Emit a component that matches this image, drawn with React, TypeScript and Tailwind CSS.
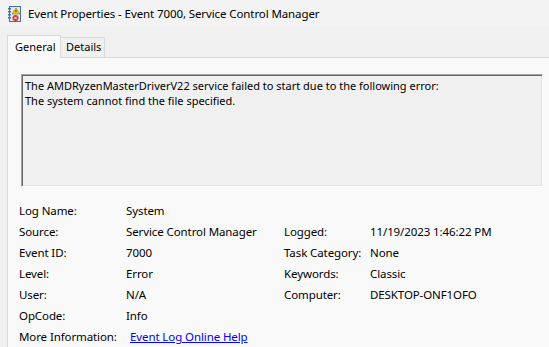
const rows: [string, string, string?, string?][] = [
  ['Log Name:', 'System'],
  ['Source:', 'Service Control Manager', 'Logged:', '11/19/2023 1:46:22 PM'],
  ['Event ID:', '7000', 'Task Category:', 'None'],
  ['Level:', 'Error', 'Keywords:', 'Classic'],
  ['User:', 'N/A', 'Computer:', 'DESKTOP-ONF1OFO'],
  ['OpCode:', 'Info'],
]

const EventIcon = () => (
  <svg width="16" height="16" viewBox="0 0 16 16">
    <rect x="2.5" y="0.5" width="11" height="15" fill="#dfe8f5" stroke="#4a6fa5" />
    <rect x="1" y="2" width="3" height="1.5" fill="#4a6fa5" />
    <rect x="1" y="5" width="3" height="1.5" fill="#4a6fa5" />
    <rect x="1" y="8" width="3" height="1.5" fill="#4a6fa5" />
    <rect x="1" y="11" width="3" height="1.5" fill="#4a6fa5" />
    <path d="M9 2 L13 8 L5 8 Z" fill="#f5c400" stroke="#9a7a00" strokeWidth="0.6" />
    <rect x="8.6" y="4" width="0.8" height="2.2" fill="#222" />
    <circle cx="8.5" cy="12" r="3" fill="#d52b2b" />
    <path d="M7.2 10.7 L9.8 13.3 M9.8 10.7 L7.2 13.3" stroke="#fff" strokeWidth="1" />
  </svg>
)

export default function App() {
  return (
    <div
      className="relative h-[347px] w-[549px] overflow-hidden bg-[#f0f0f0] text-[11.5px] tracking-[-0.1px] text-black"
      style={{ fontFamily: '"Noto Sans", "Open Sans", sans-serif' }}
    >
      <div className="flex h-[27px] items-center gap-[5px] bg-[#f3f3f3] pl-[7px]">
        <EventIcon />
        <span className="leading-none">Event Properties - Event 7000, Service Control Manager</span>
      </div>

      <div className="pl-[7px] pt-[8px]">
        <div className="flex items-end text-[11px] tracking-normal">
          <div className="relative z-10 -mb-px flex h-[23px] w-[54px] items-center border border-b-0 border-[#d9d9d9] bg-[#f9f9f9] pl-[7px]">
            General
          </div>
          <div className="flex h-[20px] w-[44px] items-center border border-b-0 border-l-0 border-[#d9d9d9] bg-[#f0f0f0] pl-[5px]">
            Details
          </div>
        </div>

        <div className="h-[400px] w-[600px] border border-[#d9d9d9] bg-[#f9f9f9] pl-[13px] pt-[16px]">
          <div className="h-[113px] w-[522px] border border-b-white border-l-[#a0a0a0] border-r-white border-t-[#a0a0a0] bg-[#f0f0f0] shadow-[inset_1px_1px_0_#696969,inset_-1px_-1px_0_#e3e3e3]">
            <div className="px-[3px] pt-[3px] text-[11px] leading-[15px] tracking-normal">
              <div>The AMDRyzenMasterDriverV22 service failed to start due to the following error:</div>
              <div>The system cannot find the file specified.</div>
            </div>
          </div>

          <div className="-ml-[2px] mt-[13px] grid grid-cols-[107px_158px_86px_1fr] auto-rows-[21px] items-center">
            {rows.map(([l, v, l2, v2]) => (
              <div key={l} className="contents">
                <div>{l}</div>
                <div>{v}</div>
                <div>{l2 ?? ''}</div>
                <div>{v2 ?? ''}</div>
              </div>
            ))}
            <div>More Information:</div>
            <div className="col-span-3 pl-[4px]">
              <a href="#" className="text-[#0000ff] underline">Event Log Online Help</a>
            </div>
          </div>
        </div>
      </div>
    </div>
  )
}
